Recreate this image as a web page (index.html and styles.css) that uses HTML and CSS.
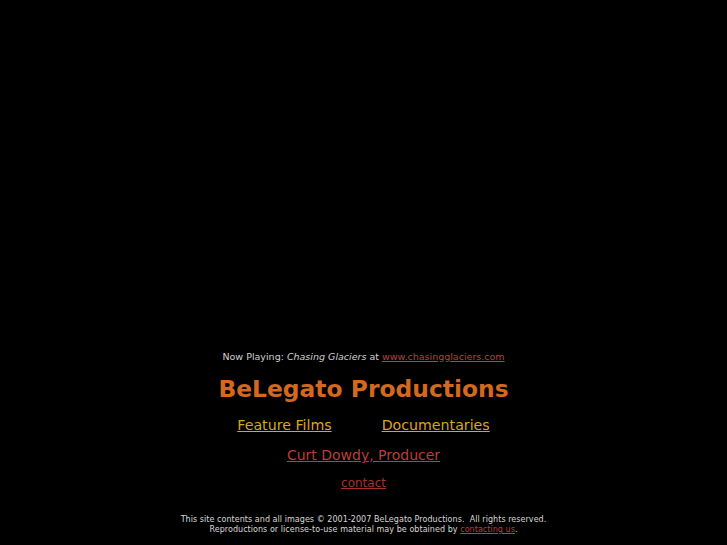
FILE: index.html
```html
<!DOCTYPE html>
<html>
<head>
<meta charset="utf-8">
<link rel="stylesheet" href="styles.css">
</head>
<body>
<div class="page">
  <div class="stage"></div>
  <p class="now">Now Playing: <em>Chasing Glaciers</em> at <a href="#" class="red">www.chasingglaciers.com</a></p>
  <h1 class="title">BeLegato Productions</h1>
  <div class="cats">
    <a href="#" class="gold">Feature Films</a>
    <a href="#" class="gold">Documentaries</a>
  </div>
  <p class="producer"><a href="#" class="red">Curt Dowdy, Producer</a></p>
  <p class="contact"><a href="#" class="dark">contact</a></p>
  <p class="foot">This site contents and all images &copy; 2001-2007 BeLegato Productions.&nbsp; All rights reserved.<br>Reproductions or license-to-use material may be obtained by <a href="#" class="red">contacting us</a>.</p>
</div>
</body>
</html>
```
FILE: styles.css
```css
html, body { margin: 0; padding: 0; background: #000; }
body { font-family: "DejaVu Sans", Verdana, sans-serif; color: #d0d0d0; }
.page { display: flex; flex-direction: column; align-items: center; text-align: center; }
.stage { height: 350px; }
.now { margin: 0; font-size: 9.5px; line-height: 14px; color: #d0d0d0; }
.title { margin: 10px 0 0; font-size: 23.4px; line-height: 30px; font-weight: bold; color: #d2691e; }
.cats { display: flex; gap: 50px; margin-top: 11px; font-size: 14.2px; line-height: 20px; }
.producer { margin: 10px 0 0; font-size: 14px; line-height: 20px; }
.contact { margin: 9px 0 0; font-size: 12px; line-height: 18px; }
.foot { margin: 23px 0 0; font-size: 8px; line-height: 10px; letter-spacing: 0.05px; color: #d8d8d8; }
.red { color: #bc3e3a; }
.gold { color: #daa520; }
.dark { color: #a8302c; }
```
